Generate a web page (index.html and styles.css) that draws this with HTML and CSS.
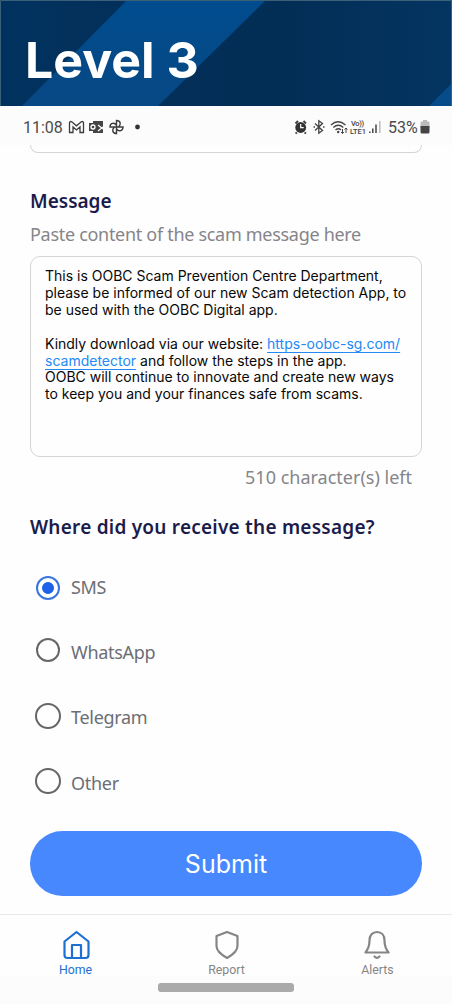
FILE: index.html
```html
<!DOCTYPE html>
<html lang="en">
<head>
<meta charset="utf-8">
<title>Level 3</title>
<link rel="stylesheet" href="styles.css">
</head>
<body>
<header class="banner">
  <svg class="banner-art" viewBox="0 0 452 106" preserveAspectRatio="none" aria-hidden="true">
    <defs>
      <linearGradient id="navy" x1="0" x2="1" y1="0" y2="0"><stop offset="0" stop-color="#01325f"/><stop offset=".25" stop-color="#03305a"/><stop offset=".6" stop-color="#022d55"/><stop offset="1" stop-color="#043561"/></linearGradient>
      <linearGradient id="beam" x1="0" x2="0" y1="0" y2="1"><stop offset="0" stop-color="#004c8e"/><stop offset="1" stop-color="#074884"/></linearGradient>
    </defs>
    <path fill="url(#navy)" d="M0 0h452v106H0z"/>
    <path fill="url(#beam)" d="M127 0h139L158 106H22z"/>
    <path fill="#064b8a" d="M452 83v23h-23z"/>
    <path fill="none" stroke="#3c6078" d="M.5 106V.5h451V106"/>
  </svg>
  <h1 class="level">Level 3</h1>
</header>
<div class="status">
  <span class="time">11:08</span>
  <svg class="status-left" viewBox="0 0 76 20" width="76" height="20" fill="none" stroke="#3b3b3b" stroke-width="1.300">
    <path d="M2.500 15.500V5.500Q3 3.800 5 5l4.500 3.800L14 5q2-1.200 2.500.5v10h-3.500V10l-3.500 3L6 10v5.500z"/>
    <path fill="#454545" stroke="none" d="M26 4h10v12H26zM22 6h9v8h-9z"/>
    <circle cx="26" cy="10" r="2" stroke="#fff"/>
    <path stroke="#fff" d="M31 8l5 4m-5 2 5-4"/>
    <path stroke-width="1.400" d="M49.500 10V3.500c4 0 5 4 2 6.500M49.500 10H56c0 4-4 5-6.500 2M49.500 10v6.500c-4 0-5-4-2-6.500M49.500 10H43c0-4 4-5 6.500-2"/>
    <circle cx="70.500" cy="10" r="2.400" fill="#333" stroke="none"/>
  </svg>
  <svg class="status-right" viewBox="0 0 90 20" width="90" height="20" fill="none" stroke="#444" stroke-width="1.300">
    <path stroke-width="2" d="M2.500 6.500 5 4M10.500 4 13 6.500M4 15.500l-1.500 1M11.500 15.500l1.500 1"/>
    <circle cx="7.700" cy="10.500" r="5.400" fill="#333" stroke="none"/>
    <path stroke="#fff" stroke-width="1.200" d="M7.700 7v3.700h3"/>
    <path d="M22 6.500l7.500 7-3.700 2.800V3.700l3.700 2.800-7.500 7M20.500 10h1.500M30 10h1.500"/>
    <path d="M38 8q7-6.500 14.500 0M40.300 10.500q5-4.500 10 0M42.500 13q3-2.500 5.500 0"/>
    <circle cx="45.200" cy="15" r="1.200" fill="#444" stroke="none"/>
    <path stroke-width="1" d="M49.500 12v4.500m-1.500-1.500 1.500 1.500 1.300-1.500M53 16v-5m-1.500 1.500L53 11l1.500 1.500"/>
    <g class="lte"><text x="58" y="9" textLength="13">Vo))</text><text x="57" y="17" textLength="16">LTE1</text></g>
    <path stroke-width="1.500" d="M76.800 16v-1.500M79.800 16v-4.500M83 16V7.500"/>
    <path stroke="#bbb" stroke-width="1.500" d="M86.800 16V4"/>
  </svg>
  <span class="percent">53%</span>
  <svg class="battery" viewBox="0 0 10 14" width="10" height="14"><path fill="#bbb" d="M3 0h4v1.500h1.500q1 0 1 1V8H.5V2.500q0-1 1-1H3z"/><path fill="#444" d="M.5 6h9v6q0 1.500-1.500 1.500H2Q.5 13.500.5 12z"/></svg>
</div>
<main class="form">
  <div class="previous-field"></div>
  <h2 class="title message-title">Message</h2>
  <p class="hint">Paste content of the scam message here</p>
  <div class="message-box">This is OOBC Scam Prevention Centre Department,<br>please be informed of our new Scam detection App, to<br>be used with the OOBC Digital app.<br><br>Kindly download via our website: <a class="link">https-oobc-sg.com/</a><br><a class="link">scamdetector</a> and follow the steps in the app.<br>OOBC will continue to innovate and create new ways<br>to keep you and your finances safe from scams.</div>
  <p class="counter">510 character(s) left</p>
  <h2 class="title source-title">Where did you receive the message?</h2>
  <div class="options">
    <div class="option"><span class="radio selected"></span><span class="option-label">SMS</span></div>
    <div class="option"><span class="radio"></span><span class="option-label">WhatsApp</span></div>
    <div class="option"><span class="radio large"></span><span class="option-label">Telegram</span></div>
    <div class="option"><span class="radio large"></span><span class="option-label">Other</span></div>
  </div>
  <button class="submit">Submit</button>
</main>
<nav class="tabs">
  <div class="tab active"><svg class="tab-icon" viewBox="0 0 28 30"><path d="M2.500 11.500 14.500 2l12 9.500V25q0 3-3 3h-18q-3 0-3-3zM10 28V15h9v13"/></svg><span>Home</span></div>
  <div class="tab"><svg class="tab-icon" viewBox="0 0 28 30"><path d="M14 2l10.500 4v10q0 6-10.500 12Q3.500 22 3.500 16V6z"/></svg><span>Report</span></div>
  <div class="tab"><svg class="tab-icon" viewBox="0 0 28 30"><path d="M1.500 22.500q4-5 4-12C5.500 5 8.500 2 13 2s7.500 3 7.500 8.500q0 7 4 12zM10.500 26.500q2.500 2.500 5 0"/></svg><span>Alerts</span></div>
</nav>
<footer class="system-bar"><div class="handle"></div></footer>
</body>
</html>
```

FILE: styles.css
```css
* { box-sizing: border-box; }
body { margin: 0; width: 452px; height: 1004px; overflow: hidden; background: #fefefe; font-family: "Noto Sans", sans-serif; display: flex; flex-direction: column; }
h1, h2, p { margin: 0; white-space: nowrap; }
.banner { height: 106px; display: grid; flex: none; }
.banner-art { grid-area: 1 / 1; width: 452px; height: 106px; }
.level { grid-area: 1 / 1; z-index: 1; padding: 29px 0 0 25px; font: 700 50px/62px Inter, sans-serif; color: #fff; }
.status { height: 39px; flex: none; background: #fcfcfc; display: flex; align-items: center; padding: 3px 0 0 23px; font-family: Roboto, sans-serif; font-size: 16px; color: #4b4b4b; }
.time { width: 44px; }
.percent { width: 32px; margin-left: 5px; white-space: nowrap; }
.status-right { margin-left: 150px; }
.lte { font: 500 7.500px Roboto, sans-serif; fill: #444; stroke: none; }
.form { height: 769px; flex: none; padding: 0 30px; display: flex; flex-direction: column; }
.previous-field { height: 8px; flex: none; border: 1.500px solid #d5d5d5; border-top: 0; border-radius: 0 0 10px 10px; }
.title { font-weight: 600; font-size: 19px; line-height: 30px; color: #1b1c4b; }
.message-title { margin-top: 33px; height: 30px; }
.hint { height: 30px; margin-top: 3px; font-size: 18px; line-height: 30px; letter-spacing: -.3px; color: #85858a; }
.message-box { height: 201px; flex: none; margin-top: 7px; border: 1.500px solid #d5d5d5; border-radius: 10px; padding: 11px 14px; font: 14px/16.900px Inter, sans-serif; color: #080808; white-space: nowrap; }
.link { color: #2389f5; text-decoration: underline; text-decoration-skip-ink: none; text-underline-offset: 3px; text-decoration-thickness: 1px; }
.counter { margin-top: 5px; height: 30px; padding-right: 10px; text-align: right; font-size: 18px; line-height: 30px; color: #85858a; }
.source-title { margin-top: 20px; height: 30px; letter-spacing: .23px; }
.options { margin: 12px 0 0 5px; display: flex; flex-direction: column; }
.option { height: 65.300px; display: flex; align-items: center; gap: 11px; }
.radio { width: 24px; height: 24px; border: 2.300px solid #666; border-radius: 50%; margin: -3px 0 0 1px; }
.radio.large { width: 26px; height: 26px; margin: -3px -1px 0 0; }
.radio.selected { margin-top: 2px; border-color: #3975dc; background: radial-gradient(circle, #1d62e8 5.500px, #fff 6.300px); }
.option-label { font-size: 18px; line-height: 30px; letter-spacing: -.3px; color: #6b6e75; }
.submit { height: 65px; flex: none; margin-top: 16px; border: 0; border-radius: 33px; padding: 1px 0 0; background: #4788ff; color: #fff; font: 25px/30px Inter, sans-serif; }
.tabs { height: 62px; flex: none; border-top: 1px solid #eaeaea; display: flex; padding-top: 15px; }
.tab { width: 151px; flex: none; display: flex; flex-direction: column; align-items: center; color: #858585; font: 12.300px/16px Roboto, sans-serif; }
.tab-icon { width: 28px; height: 30px; margin-bottom: 2px; flex: none; fill: none; stroke: currentColor; stroke-width: 2.200; stroke-linejoin: round; stroke-linecap: round; }
.tab.active { color: #1c70d2; }
.system-bar { flex: 1; background: #fcfcfc; display: flex; justify-content: center; padding-top: 7px; }
.handle { width: 136px; height: 9px; border-radius: 3px; background: #aaa; }
```
